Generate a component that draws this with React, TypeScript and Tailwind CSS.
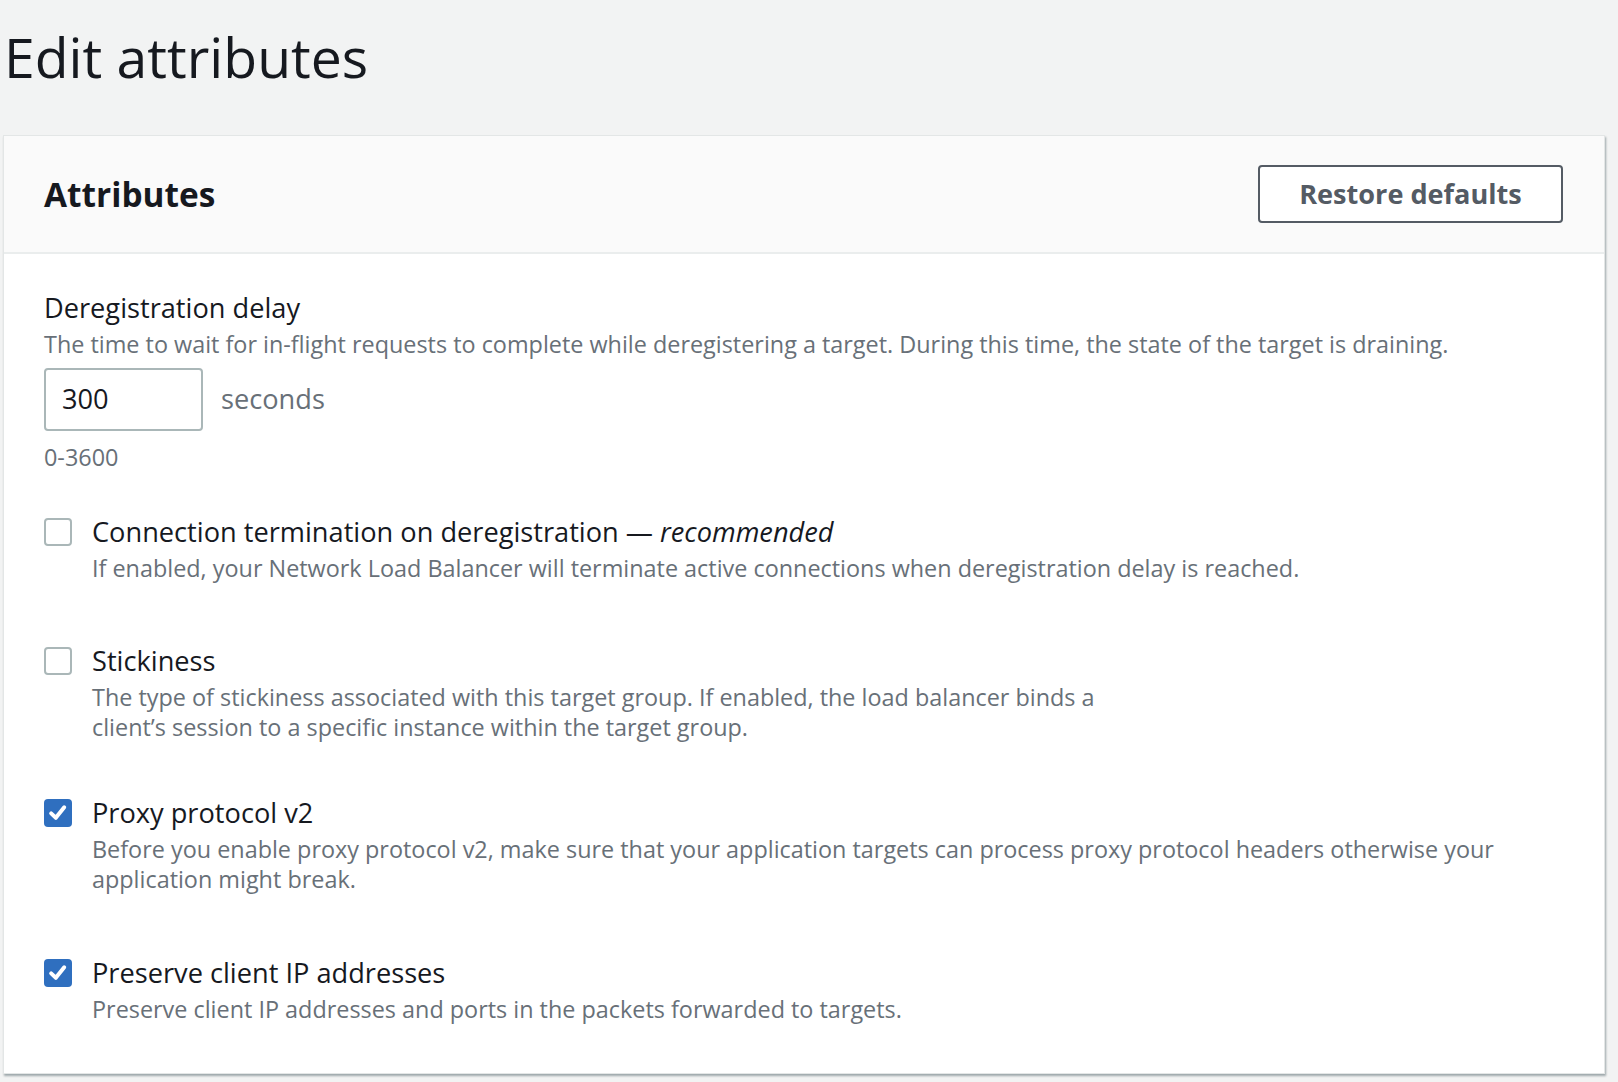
import React from "react";

const font = { fontFamily: "'Open Sans', Lato, sans-serif" };

function Check({ checked }: { checked: boolean }) {
  if (checked) {
    return (
      <div className="w-[28px] h-[28px] rounded-[4px] bg-[#2f6fbf] flex items-center justify-center shrink-0">
        <svg width="24" height="24" viewBox="0 0 20 20">
          <path d="M4.3 10.3 L8.2 14 L15.2 5.2" fill="none" stroke="white" strokeWidth="3.3" strokeLinecap="round" strokeLinejoin="round" />
        </svg>
      </div>
    );
  }
  return <div className="w-[28px] h-[28px] rounded-[4px] border-2 border-[#aab7b8] bg-white shrink-0" />;
}

function Item({
  checked,
  label,
  desc,
  className,
}: {
  checked: boolean;
  label: React.ReactNode;
  desc: React.ReactNode;
  className?: string;
}) {
  return (
    <div className={"flex gap-[20px] " + (className ?? "")}>
      <div className="h-[36px] flex items-center">
        <Check checked={checked} />
      </div>
      <div className="flex flex-col">
        <div className="text-[27.2px] leading-[36px] text-[#16191f]">{label}</div>
        <div className="mt-[3px] text-[23.4px] leading-[30px] text-[#687078]">{desc}</div>
      </div>
    </div>
  );
}

export default function App() {
  return (
    <div style={font} className="w-[1618px] h-[1082px] bg-[#f2f3f3] overflow-hidden">
      <h1 className="pl-[4px] pt-[22px] h-[135px] text-[55.3px] leading-[70px] text-[#16191f]">Edit attributes</h1>
      <div className="ml-[3px] w-[1602px] bg-white border border-[#e3e6e6] shadow-[1px_2px_2px_rgba(0,28,36,0.35)]">
        <div className="h-[118px] bg-[#fafafa] border-b-2 border-[#eaeded] flex items-center justify-between pl-[40px] pr-[41px]">
          <h2 className="text-[33.4px] font-bold text-[#16191f]">Attributes</h2>
          <button className="w-[305px] h-[58px] rounded-[4px] border-2 border-[#545b64] bg-white text-[27.1px] font-bold text-[#545b64]">
            Restore defaults
          </button>
        </div>
        <div className="pl-[40px] pt-[36px] pb-[49px]">
          <div className="text-[27.2px] leading-[36px] text-[#16191f]">Deregistration delay</div>
          <div className="mt-[3px] text-[23.4px] leading-[30px] text-[#687078]">
            The time to wait for in-flight requests to complete while deregistering a target. During this time, the state of the target is draining.
          </div>
          <div className="mt-[9px] flex items-center gap-[18px]">
            <div className="w-[159px] h-[63px] rounded-[4px] border-2 border-[#aab7b8] flex items-center pl-[16px] text-[27.2px] text-[#16191f]">
              300
            </div>
            <div className="text-[27.2px] text-[#687078]">seconds</div>
          </div>
          <div className="mt-[11px] text-[23.4px] leading-[30px] text-[#687078]">0-3600</div>

          <Item
            className="mt-[42px]"
            checked={false}
            label={
              <>
                Connection termination on deregistration — <i>recommended</i>
              </>
            }
            desc="If enabled, your Network Load Balancer will terminate active connections when deregistration delay is reached."
          />
          <Item
            className="mt-[60px]"
            checked={false}
            label="Stickiness"
            desc={
              <>
                The type of stickiness associated with this target group. If enabled, the load balancer binds a
                <br />
                client’s session to a specific instance within the target group.
              </>
            }
          />
          <Item
            className="mt-[53px]"
            checked={true}
            label="Proxy protocol v2"
            desc={
              <>
                Before you enable proxy protocol v2, make sure that your application targets can process proxy protocol headers otherwise your
                <br />
                application might break.
              </>
            }
          />
          <Item
            className="mt-[61px]"
            checked={true}
            label="Preserve client IP addresses"
            desc="Preserve client IP addresses and ports in the packets forwarded to targets."
          />
        </div>
      </div>
    </div>
  );
}
